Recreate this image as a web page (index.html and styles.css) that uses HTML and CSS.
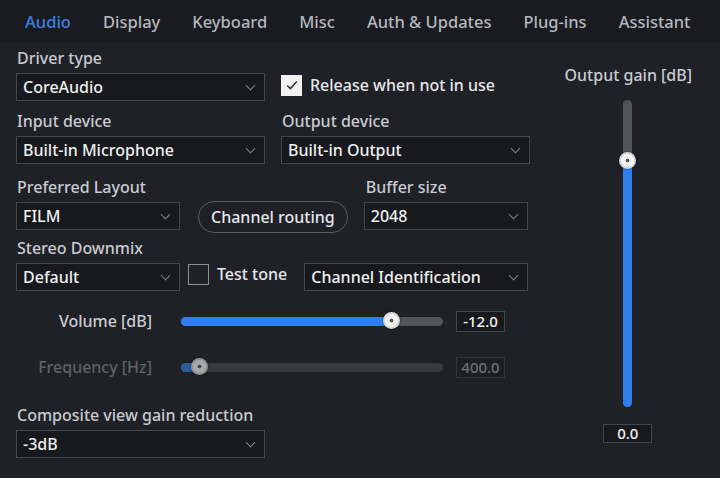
FILE: index.html
```html
<!DOCTYPE html>
<html lang="en">
<head>
  <meta charset="UTF-8">
  <title>Audio preferences</title>
  <link rel="stylesheet" href="styles.css">
</head>
<body>

  <!-- Tabs -->
  <nav class="tabs">
    <span class="tab active">Audio</span>
    <span class="tab">Display</span>
    <span class="tab">Keyboard</span>
    <span class="tab">Misc</span>
    <span class="tab">Auth &amp; Updates</span>
    <span class="tab">Plug-ins</span>
    <span class="tab">Assistant</span>
  </nav>

  <div class="panel">
    <div class="main">

      <div class="row row-driver">
        <div class="field wide">
          <div class="label">Driver type</div>
          <div class="select">CoreAudio<span class="chev"></span></div>
        </div>
        <div class="check on">
          <span class="box"><svg viewBox="0 0 20 20" width="16" height="16"><polyline points="4,10.5 8,14.5 16,5.5" fill="none" stroke="#2a2c31" stroke-width="1.8"/></svg></span>
          Release when not in use
        </div>
      </div>

      <div class="row row-devices">
        <div class="field wide">
          <div class="label">Input device</div>
          <div class="select">Built-in Microphone<span class="chev"></span></div>
        </div>
        <div class="field wide">
          <div class="label">Output device</div>
          <div class="select">Built-in Output<span class="chev"></span></div>
        </div>
      </div>

      <div class="row row-layout">
        <div class="field narrow">
          <div class="label">Preferred Layout</div>
          <div class="select">FILM<span class="chev"></span></div>
        </div>
        <div class="button">Channel routing</div>
        <div class="field narrow buffer">
          <div class="label">Buffer size</div>
          <div class="select">2048<span class="chev"></span></div>
        </div>
      </div>

      <div class="row row-downmix">
        <div class="field narrow">
          <div class="label">Stereo Downmix</div>
          <div class="select">Default<span class="chev"></span></div>
        </div>
        <div class="check">
          <span class="box"></span>
          Test tone
        </div>
        <div class="select tone">Channel Identification<span class="chev"></span></div>
      </div>

      <div class="slider-row volume">
        <div class="slider-label">Volume [dB]</div>
        <div class="track"><div class="fill" style="width: 80%"><span class="thumb"></span></div></div>
        <div class="value">-12.0</div>
      </div>

      <div class="slider-row disabled">
        <div class="slider-label">Frequency [Hz]</div>
        <div class="track"><div class="fill" style="width: 7%"><span class="thumb"></span></div></div>
        <div class="value">400.0</div>
      </div>

      <div class="field wide composite">
        <div class="label">Composite view gain reduction</div>
        <div class="select">-3dB<span class="chev"></span></div>
      </div>

    </div>

    <!-- Output gain -->
    <div class="side">
      <div class="label">Output gain [dB]</div>
      <div class="vtrack"><div class="vfill" style="height: 80%"><span class="thumb"></span></div></div>
      <div class="value">0.0</div>
    </div>
  </div>

</body>
</html>
```

FILE: styles.css
```css
html, body {
  margin: 0;
  padding: 0;
  width: 100%;
  height: 100%;
  overflow: hidden;
  background: #1f2127;
  font-family: 'Noto Sans', 'Open Sans', sans-serif;
  font-size: 16px;
  font-weight: 500;
  color: #c9cbd0;
}

/* Tabs */
.tabs {
  display: flex;
  height: 43px;
  align-items: center;
  padding-left: 9px;
  background: #191b20;
  white-space: nowrap;
}

.tab {
  position: relative;
  flex-shrink: 0;
  padding: 0 16px;
  color: #b4b7bd;
  font-size: 16.5px;
  line-height: 43px;
}

.tab.active {
  color: #3b80e6;
}

.tab.active::before {
  content: '';
  position: absolute;
  inset: 0 -4px 0 0;
  background: #23252c;
  clip-path: polygon(10px 0, calc(100% - 10px) 0, 100% 100%, 0 100%);
  z-index: -1;
}

/* Panel */
.panel {
  display: flex;
}

.main {
  width: 540px;
  padding-left: 16px;
  box-sizing: border-box;
}

.row {
  display: flex;
  align-items: flex-end;
}

.row-driver { margin-top: 4px; gap: 16px; }
.row-devices { margin-top: 9px; gap: 16px; }
.row-layout { margin-top: 12px; }
.row-downmix { margin-top: 7px; }

.label {
  line-height: 22px;
  margin-bottom: 4px;
  padding-left: 1px;
}

.wide { width: 249px; }
.narrow { width: 164px; }

.select {
  position: relative;
  height: 28px;
  box-sizing: border-box;
  border: 1px solid #45484f;
  background: #17191d;
  color: #eeeff1;
  line-height: 26px;
  padding-left: 6px;
  white-space: nowrap;
}

.chev {
  position: absolute;
  right: 10px;
  top: 8px;
  width: 6px;
  height: 6px;
  border-right: 1.5px solid #80838a;
  border-bottom: 1.5px solid #80838a;
  transform: rotate(45deg);
}

/* Checkbox */
.check {
  display: flex;
  align-items: center;
  gap: 8px;
  color: #e6e7ea;
  line-height: 22px;
}

.row-driver .check { margin-bottom: 5px; }
.row-downmix .check { margin: 0 0 6px 8px; }

.box {
  width: 19px;
  height: 19px;
  border: 1px solid #8d9096;
  display: flex;
  align-items: center;
  justify-content: center;
}

.check.on .box {
  background: #f2f2f2;
  border-color: #f2f2f2;
}

/* Button */
.button {
  margin: 0 16px 0 18px;
  height: 32px;
  box-sizing: border-box;
  padding: 0 12px;
  border: 1px solid #5a5d64;
  border-radius: 16px;
  line-height: 30px;
  color: #e6e7ea;
  position: relative;
  top: 3px;
}

.buffer .label { padding-left: 2px; }

.select.tone {
  width: 224px;
  margin-left: 17px;
}

/* Sliders */
.slider-row {
  display: flex;
  align-items: center;
  height: 24px;
  margin-top: 22px;
}

.slider-row.volume { margin-top: 18px; }

.slider-label {
  width: 136px;
  text-align: right;
}

.track {
  width: 262px;
  height: 9px;
  margin: 0 13px 0 29px;
  border-radius: 5px;
  background: #50545b;
}

.fill {
  position: relative;
  height: 100%;
  border-radius: 5px;
  background: #2f7ff0;
}

.thumb {
  position: absolute;
  right: -9px;
  top: -5px;
  width: 17px;
  height: 17px;
  border-radius: 50%;
  background: radial-gradient(circle, #555 0 1.6px, #f4f4f4 2.2px 6px, #d6d6d6 7px);
  box-shadow: 0 0 2px rgba(0, 0, 0, 0.6);
}

.value {
  width: 49px;
  height: 21px;
  box-sizing: border-box;
  border: 1px solid #44474e;
  background: #17191d;
  color: #f2f2f2;
  font-size: 15px;
  line-height: 19px;
  text-align: center;
}

.disabled .slider-label { color: #5f6269; }
.disabled .track { background: #383b42; }
.disabled .fill { background: #2b5c9c; }
.disabled .thumb { background: radial-gradient(circle, #444 0 1.6px, #a8a9ab 2.2px 6px, #8f9194 7px); }
.disabled .value { color: #6d7077; border-color: #31343a; background: #1c1e23; }

.composite { margin-top: 25px; }

/* Output gain */
.side {
  width: 186px;
  display: flex;
  flex-direction: column;
  align-items: center;
  padding-top: 21px;
}

.side .label { margin-bottom: 14px; }

.vtrack {
  position: relative;
  width: 9px;
  height: 307px;
  border-radius: 5px;
  background: #50545b;
}

.vfill {
  position: absolute;
  left: 0;
  right: 0;
  bottom: 0;
  border-radius: 5px;
  background: #2f7ff0;
}

.vfill .thumb {
  right: auto;
  left: -4px;
  top: -9px;
}

.side .value {
  margin-top: 17px;
  height: 19px;
  line-height: 17px;
}
```
